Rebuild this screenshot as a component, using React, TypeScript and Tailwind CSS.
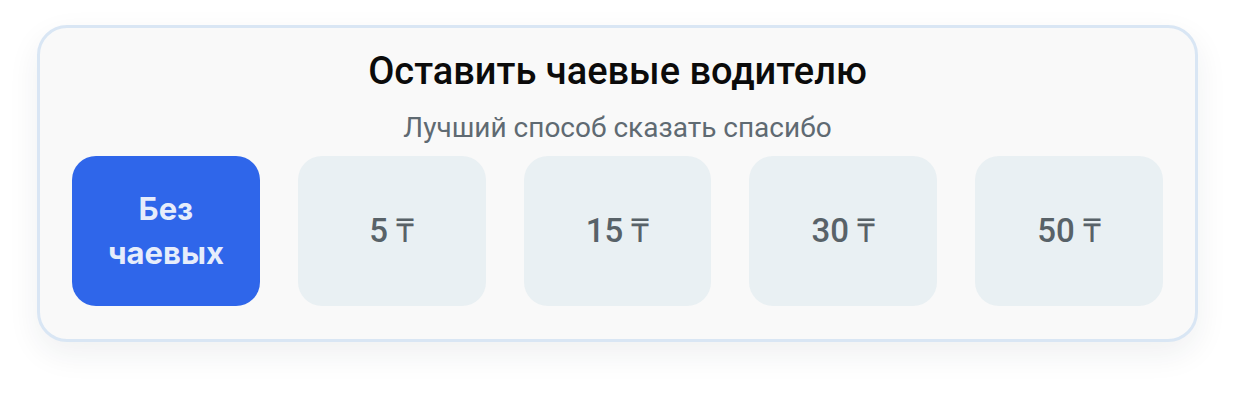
import { useState } from "react"

const amounts = [5, 15, 30, 50]

const base = "flex h-[150px] items-center justify-center rounded-[24px]"
const active = "bg-[#2f66ea] text-[#e6edfb]"
const idle = "bg-[#e9f0f3] text-[#586268]"

export default function App() {
  const [selected, setSelected] = useState<number | null>(null)

  return (
    <div className="min-h-[400px] w-[1244px] bg-white pt-[25px] pl-[37px] font-['Roboto',sans-serif]">
      <div className="w-[1161px] rounded-[30px] border-[3px] border-[#d9e6f4] bg-[#f9f9f9] px-[32px] pt-[21px] pb-[33px] shadow-[0_12px_32px_rgba(30,40,60,0.07)]">
        <h2 className="text-center text-[38px] leading-[44px] font-medium text-[#0b0b0b]">
          Оставить чаевые водителю
        </h2>
        <p className="mt-[19px] text-center text-[28px] leading-[32px] text-[#5f6a72]">
          Лучший способ сказать спасибо
        </p>
        <div className="mt-[12px] grid grid-cols-5 gap-[38px]">
          <button
            onClick={() => setSelected(null)}
            className={`${base} flex-col font-['Inter',sans-serif] text-[31px] leading-[44px] font-bold ${selected === null ? active : idle}`}
          >
            <span>Без</span>
            <span>чаевых</span>
          </button>
          {amounts.map(a => (
            <button
              key={a}
              onClick={() => setSelected(a)}
              className={`${base} text-[33px] font-medium ${selected === a ? active : idle}`}
            >
              {a} ₸
            </button>
          ))}
        </div>
      </div>
    </div>
  )
}
